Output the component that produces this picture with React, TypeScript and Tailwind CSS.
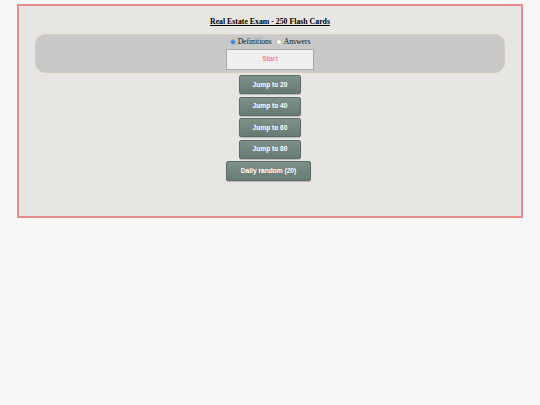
import React, { useState } from 'react';

const jumps = [20, 40, 60, 80];

export default function App() {
  const [mode, setMode] = useState<'definitions' | 'answers'>('definitions');

  return (
    <div className="min-h-[405px] w-full bg-[#f7f7f7] pt-[4px]" style={{ fontFamily: '"Liberation Serif", serif' }}>
      <div className="mx-[17px] h-[214px] border-2 border-[#e88b8b] bg-[#e7e6e2] px-[16px] pt-[11px]">
        <h1 className="text-center text-[7.8px] font-bold leading-[10px] text-black underline">
          Real Estate Exam - 250 Flash Cards
        </h1>

        {/* options panel */}
        <div className="mt-[7px] flex h-[39px] flex-col items-center rounded-[10px] border border-[#d9cfc0] bg-[#c8c8c8] pt-[2px]">
          <div className="flex items-center gap-[2px] text-[7.6px] leading-[10px] text-[#111]">
            <button
              onClick={() => setMode('definitions')}
              className="flex h-[6px] w-[6px] items-center justify-center rounded-full border border-[#9aa] bg-white"
            >
              {mode === 'definitions' && <span className="h-[4px] w-[4px] rounded-full bg-[#2f7ff0]" />}
            </button>
            <span>Definitions</span>
            <button
              onClick={() => setMode('answers')}
              className="ml-[2px] flex h-[6px] w-[6px] items-center justify-center rounded-full border border-[#bbb] bg-white"
            >
              {mode === 'answers' && <span className="h-[4px] w-[4px] rounded-full bg-[#2f7ff0]" />}
            </button>
            <span>Answers</span>
          </div>
          <button
            className="mt-[2px] h-[21px] w-[88px] border border-[#aaa] bg-[#f0efef] text-[6.8px] font-bold text-[#ee8a8a]"
            style={{ fontFamily: '"Liberation Sans", sans-serif' }}
          >
            Start
          </button>
        </div>

        {/* navigation */}
        <div
          className="mt-[2px] flex flex-col items-center gap-[2.5px]"
          style={{ fontFamily: '"Liberation Sans", sans-serif' }}
        >
          {jumps.map((n) => (
            <button
              key={n}
              className="h-[19px] w-[62px] rounded-[2px] border border-[#5d6e68] bg-gradient-to-b from-[#7e908a] to-[#677a73] text-[6.6px] font-bold text-white shadow-[0_1px_1px_rgba(0,0,0,0.2)]"
            >
              Jump to {n}
            </button>
          ))}
          <button className="mr-[3px] h-[20px] w-[85px] rounded-[2px] border border-[#5d6e68] bg-gradient-to-b from-[#7e908a] to-[#677a73] text-[6.6px] font-bold text-white shadow-[0_1px_1px_rgba(0,0,0,0.2)]">
            Daily random (20)
          </button>
        </div>
      </div>
    </div>
  );
}
